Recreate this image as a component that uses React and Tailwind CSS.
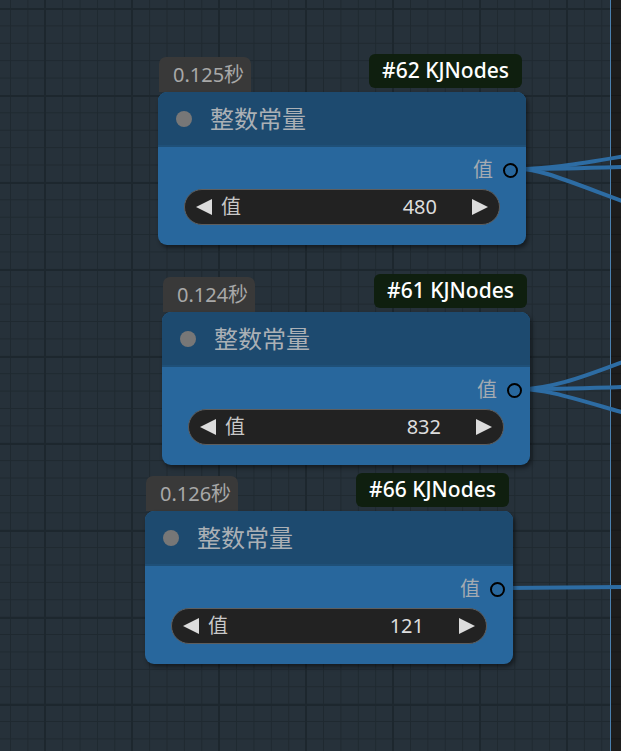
import React from 'react';

const nodes = [
  { id: 62, time: '0.125秒', value: 480, x: 158, y: 57, right: 4, idLift: 4 },
  { id: 61, time: '0.124秒', value: 832, x: 162, y: 277, right: 3, idLift: 4 },
  { id: 66, time: '0.126秒', value: 121, x: 145, y: 476, right: 4, idLift: 4 },
];

// wires go off the right edge towards nodes we can't see
const wires = [
  'M518,169 C545,169 572,165 625,156',
  'M518,169 C555,169 585,168 625,167',
  'M518,169 C540,169 560,178 625,202',
  'M520,389 C548,389 575,380 625,361',
  'M520,389 C558,389 588,388 625,387',
  'M520,389 C545,389 572,398 625,413',
  'M504,588 C540,588 580,587 625,587',
];

const Arrow = ({ dir }) => (
  <svg width="18" height="18" viewBox="0 0 18 18" className="shrink-0">
    {dir === 'left' ? (
      <polygon points="17,1 17,17 1,9" fill="#dcdcdc" />
    ) : (
      <polygon points="1,1 1,17 17,9" fill="#dcdcdc" />
    )}
  </svg>
);

const Node = ({ node }) => (
  <div
    className="absolute w-[368px] flex flex-col"
    style={{ left: node.x, top: node.y }}
  >
    {/* badges above the node */}
    <div className="flex items-end justify-between h-[35px]">
      <div className="w-[92px] h-[35px] ml-px pl-[14px] flex items-center rounded-t-[7px] bg-[#393939] text-[#a8a8a8] text-[20px]">
        {node.time}
      </div>
      <div
        className="w-[153px] h-[34px] flex items-center justify-center rounded-[6px] bg-[#0f1f0f] text-white text-[21px] font-medium"
        style={{ marginRight: node.right, marginBottom: node.idLift }}
      >
        #{node.id} KJNodes
      </div>
    </div>

    <div className="rounded-[9px] overflow-hidden bg-[#28679d] shadow-[2px_3px_4px_rgba(0,0,0,0.45)]">
      <div className="h-[55px] flex items-center pl-[18px] gap-[18px] bg-[#1d4a6f] border-b-2 border-[#1f5078]">
        <div className="w-4 h-4 rounded-full bg-[#777]" />
        <span className="text-[24px] text-[#abb0b5] leading-none">整数常量</span>
      </div>
      <div className="pt-[11px] pb-[20px]">
        <div className="h-[24px] flex items-center justify-end gap-[10px] pr-[8px]">
          <span className="text-[20px] text-[#a4abb2] leading-none">值</span>
          <div className="w-[15px] h-[15px] rounded-full border-2 border-black" />
        </div>
        <div className="mx-[26px] mt-[7px] h-[36px] rounded-full bg-[#222] border-[1.5px] border-[#5e5e5e] flex items-center px-[10px]">
          <Arrow dir="left" />
          <span className="ml-[8px] text-[20px] text-[#c8c8c8] leading-none">值</span>
          <span className="ml-auto mr-[34px] text-[20px] text-[#dddddd] leading-none">{node.value}</span>
          <Arrow dir="right" />
        </div>
      </div>
    </div>
  </div>
);

export default function App() {
  return (
    <div className="relative w-[621px] h-[751px] overflow-hidden flex font-['Noto_Sans','Noto_Sans_CJK_SC',sans-serif]">
      <div className="flex-1 h-full bg-[#26313a] [background-image:linear-gradient(to_right,#1d272e_2px,transparent_2px),linear-gradient(to_bottom,#1d272e_2px,transparent_2px),linear-gradient(to_right,#1f2930_1px,transparent_1px),linear-gradient(to_bottom,#1f2930_1px,transparent_1px)] [background-size:87px_87px,87px_87px,17.4px_17.4px,17.4px_17.4px] [background-position:44px_8px,44px_8px,10px_8px,10px_8px]" />
      <div className="w-[11px] h-full border-l border-[#4b80ae] bg-[#1d1d1d] [background-image:linear-gradient(to_bottom,#171717_1px,transparent_1px)] [background-size:17.4px_17.4px] [background-position:0_8px]" />

      {/* wires */}
      <svg className="absolute inset-0" width="621" height="751">
        {wires.map((d, i) => (
          <path key={i} d={d} fill="none" stroke="#2d6ca3" strokeWidth="4" />
        ))}
      </svg>

      {nodes.map((n) => (
        <Node key={n.id} node={n} />
      ))}
    </div>
  );
}
